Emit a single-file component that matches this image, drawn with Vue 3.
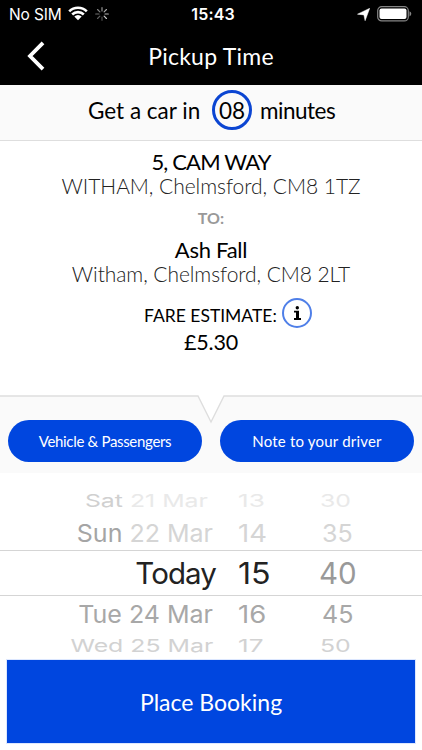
<script setup>
const wheel = [
  { pos: 'far before', day: 'Sat', date: '21 Mar', hour: '13', minute: '30' },
  { pos: 'near before', day: 'Sun', date: '22 Mar', hour: '14', minute: '35' },
  { pos: 'selected', day: 'Today', date: '', hour: '15', minute: '40' },
  { pos: 'near after', day: 'Tue', date: '24 Mar', hour: '16', minute: '45' },
  { pos: 'far after', day: 'Wed', date: '25 Mar', hour: '17', minute: '50' },
]
const spokes = [0, 45, 90, 135, 180, 225, 270, 315]
</script>

<template>
  <div class="screen">
    <header class="top">
      <div class="status">
        <span class="carrier">No SIM</span>
        <svg class="wifi" width="20" height="15" viewBox="0 0 20 15">
          <path d="M1.2 5.4a12.4 12.4 0 0 1 17.6 0M4.2 8.5a8.2 8.2 0 0 1 11.6 0" fill="none" stroke="#fff" stroke-width="2.6" />
          <path d="M6.3 10.6a5.2 5.2 0 0 1 7.4 0L10 14.3z" fill="#fff" />
        </svg>
        <svg class="spinner" width="14" height="14" viewBox="-7 -7 14 14">
          <line v-for="(a, i) in spokes" :key="a" y1="-3" y2="-6.3" :transform="`rotate(${a})`" stroke="#fff" stroke-width="1.2" stroke-linecap="round" :opacity="0.3 + ((i + 4) % 8) * 0.07" />
        </svg>
        <span class="clock">15:43</span>
        <svg class="location" width="13" height="13" viewBox="0 0 13 13"><path d="M12.7.3 8.1 12.7 6.9 6.9.5 6.2z" fill="#fff" stroke="#fff" stroke-width=".5" stroke-linejoin="round" /></svg>
        <svg class="battery" width="35" height="16" viewBox="0 0 35 16">
          <rect x=".7" y=".7" width="30.6" height="14.2" rx="4" fill="none" stroke="#858585" stroke-width="1.2" />
          <rect x="2.5" y="2.5" width="27" height="10.6" rx="2" fill="#fff" />
          <path d="M32.5 5.2v5.2q1.8-.8 1.8-2.6t-1.8-2.6z" fill="#858585" />
        </svg>
      </div>
      <div class="nav">
        <svg class="back" width="18" height="30" viewBox="0 0 18 30"><path d="M16 1.8 3 15l13 13.2" fill="none" stroke="#fff" stroke-width="3.8" /></svg>
        <h1 class="title">Pickup Time</h1>
      </div>
    </header>

    <section class="eta">
      <span class="eta-lead">Get a car in</span>
      <span class="eta-ring"><span>08</span></span>
      <span class="eta-unit">minutes</span>
    </section>

    <section class="trip">
      <p class="street from">5, CAM WAY</p>
      <p class="area area-from">WITHAM, Chelmsford, CM8 1TZ</p>
      <p class="to">TO:</p>
      <p class="street dest">Ash Fall</p>
      <p class="area area-dest">Witham, Chelmsford, CM8 2LT</p>
      <div class="fare">
        <span class="fare-label">FARE ESTIMATE:</span>
        <span class="info"><svg width="9" height="14" viewBox="0 0 9 14"><circle cx="4.3" cy="1.8" r="1.7" /><path d="M1 4.8h5v7.3h2V14H1v-1.9h2V6.5H1z" /></svg></span>
      </div>
      <p class="price">£5.30</p>
    </section>

    <section class="options">
      <svg class="notch" width="422" height="78" viewBox="0 0 422 78">
        <path d="M0 1h198l13 26 13-26h198v77H0z" fill="#fafafa" />
        <path d="M0 1h198l13 26 13-26h198" fill="none" stroke="#dedede" stroke-width="1.4" />
      </svg>
      <button class="pill vehicle"><span>Vehicle &amp; Passengers</span></button>
      <button class="pill note"><span>Note to your driver</span></button>
    </section>

    <section class="wheel">
      <div v-for="row in wheel" :key="row.hour" class="row" :class="row.pos">
        <span class="day"><b>{{ row.day }}</b><i v-if="row.date">&nbsp;{{ row.date }}</i></span>
        <span class="hour">{{ row.hour }}</span>
        <span class="minute">{{ row.minute }}</span>
      </div>
    </section>

    <button class="book"><span>Place Booking</span></button>
  </div>
</template>

<style>
body { margin: 0; background: #fff; }
</style>

<style scoped>
* { box-sizing: border-box; }
.screen { width: 422px; height: 750px; overflow: hidden; background: #fff; color: #000; font-family: Lato, "Liberation Sans", sans-serif; display: flex; flex-direction: column; }
p, h1 { margin: 0; font-weight: 400; white-space: nowrap; }
button { border: 0; padding: 0; font-family: inherit; color: #fff; white-space: nowrap; }
svg { display: block; flex: none; }

.top { height: 85px; background: #000; color: #fff; flex: none; }
.status { height: 28px; display: flex; align-items: center; padding: 0 10px 0 9px; font-family: Inter, sans-serif; }
.carrier { width: 60px; font-size: 15.5px; letter-spacing: -.15px; white-space: nowrap; }
.wifi { margin-top: -2px; }
.spinner { margin-left: 7px; }
.clock { margin-left: 82px; width: 168px; font-size: 16px; font-weight: 600; letter-spacing: .2px; }
.battery { margin-left: 7px; }
.nav { height: 56px; display: grid; grid-template-columns: 60px 302px 60px; align-items: center; }
.back { margin: 0 0 0 27px; }
.title { text-align: center; font-size: 23px; line-height: 30px; letter-spacing: .25px; }

.eta { height: 56px; flex: none; display: flex; align-items: center; background: #fafafa; border-bottom: 1px solid #dedede; padding: 0 0 5px 88px; font-size: 22.5px; white-space: nowrap; }
.eta-lead { width: 124px; }
.eta-ring { width: 40px; height: 40px; border: 3px solid #0b45d2; border-radius: 50%; display: flex; align-items: center; justify-content: center; }
.eta-unit { margin-left: 8px; letter-spacing: -.5px; }

.trip { height: 254px; flex: none; padding-top: 9px; text-align: center; }
.street { font-size: 22px; line-height: 24px; letter-spacing: -.25px; }
.from { letter-spacing: -.85px; }
.area { margin-top: 1px; font-size: 21px; line-height: 22px; font-weight: 300; color: #222; }
.area-from { letter-spacing: -.05px; }
.to { margin-top: 11px; font-size: 16px; line-height: 20px; font-weight: 700; color: #999; }
.dest { margin-top: 10px; }
.area-dest { letter-spacing: -.08px; }
.fare { margin-top: 12px; height: 32px; padding-left: 144px; display: flex; align-items: center; }
.fare-label { width: 138px; text-align: left; font-size: 17.5px; white-space: nowrap; padding-top: 4px; }
.info { width: 30px; height: 30px; border: 2px solid #4f7fe8; border-radius: 50%; display: flex; align-items: center; justify-content: center; }
.price { font-size: 21.5px; line-height: 26px; letter-spacing: -.2px; }

.options { height: 78px; flex: none; position: relative; display: flex; gap: 18px; padding: 25px 8px 10px; }
.notch { position: absolute; left: 0; top: 0; }
.pill { position: relative; width: 194px; height: 42px; margin: 0; border-radius: 21px; background: #0046df; font-size: 15px; }
.vehicle { letter-spacing: -.32px; }
.note { letter-spacing: .2px; }

.wheel { height: 187px; flex: none; padding-top: 12px; font-family: Inter, sans-serif; }
.row { display: grid; grid-template-columns: 216px 104px 102px; align-items: center; white-space: nowrap; }
.row span { line-height: 1; }
.row b, .row i { font-weight: 400; font-style: normal; }
.day { justify-self: end; transform-origin: right center; }
.hour, .minute { justify-self: start; transform-origin: left center; }
.hour { margin-left: 22px; }
.far { height: 32px; font-size: 23px; color: #d2d2d2; }
.far span { transform: scale(1.08, .78); }
.far .day { margin-right: 3px; }
.far.after { height: 28px; }
.far.before { color: #e9e9e9; }
.far.before .day { margin-right: 8px; }
.far.before b { color: #d0d0d0; }
.far .hour { transform: scale(1.14, .78); }
.near { height: 35px; font-size: 25px; color: #a8a8a8; }
.near.after { height: 36px; padding-top: 1px; }
.near span { transform: scaleY(.97); }
.near .day { margin-right: 3px; }
.near.before { height: 33px; color: #d5d5d5; }
.near.before b { color: #a5a5a5; }
.near .hour { transform: scale(1.1, .97); }
.near .minute { margin-left: 2px; }
.selected { height: 46px; padding-top: 2px; border-top: 1px solid #d5d5d5; border-bottom: 1px solid #d5d5d5; font-size: 29.5px; color: #222; }
.selected .day { letter-spacing: -.9px; }
.selected .hour { transform: scaleX(1.09); }
.selected .minute { margin-left: -1px; color: #999; }

.book { width: 408px; height: 83px; flex: none; margin: 0 0 0 7px; background: #0046df; outline: 1px solid #dce7ff; font-size: 23px; }
</style>
